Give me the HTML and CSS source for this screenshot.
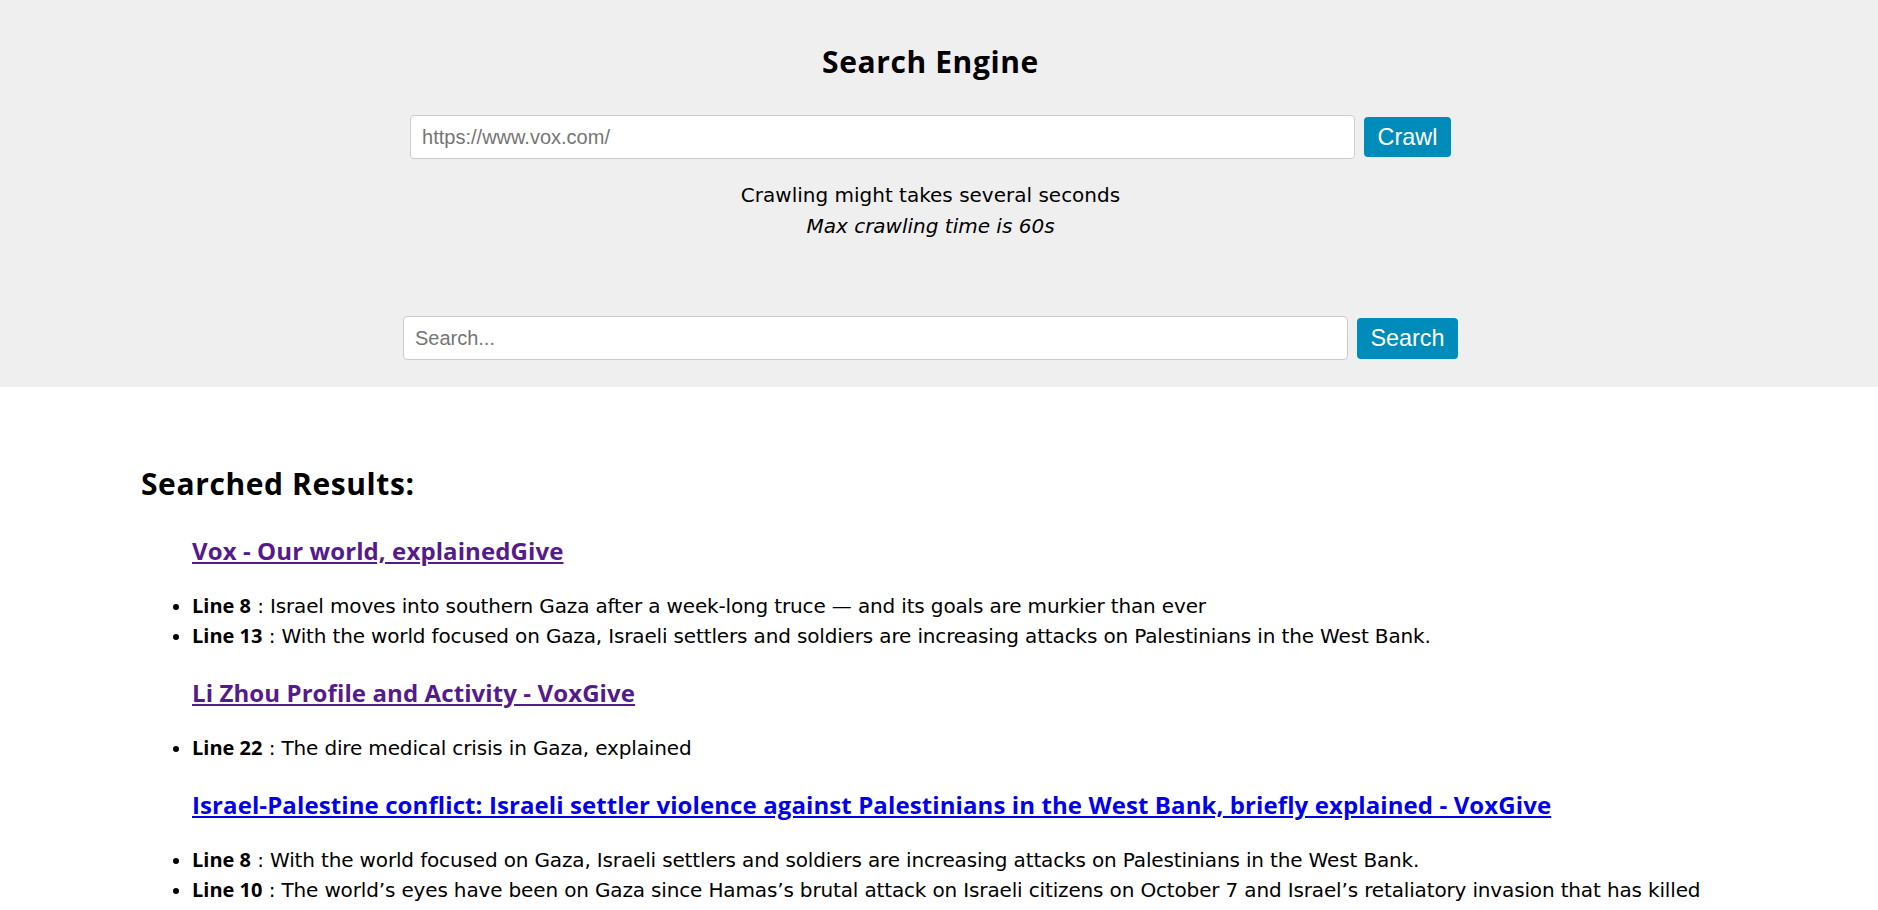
FILE: index.html
```html
<!DOCTYPE html>
<html lang="en">
<head>
<meta charset="utf-8">
<title>Search Engine</title>
<link rel="stylesheet" href="styles.css">
</head>
<body>
<header class="top">
  <h1 class="title">Search Engine</h1>
  <form class="bar bar-crawl">
    <input class="field" type="text" placeholder="https://www.vox.com/">
    <button class="btn" type="button">Crawl</button>
  </form>
  <p class="note">Crawling might takes several seconds<br><em>Max crawling time is 60s</em></p>
  <form class="bar bar-search">
    <input class="field" type="text" placeholder="Search...">
    <button class="btn btn-search" type="button">Search</button>
  </form>
</header>
<main class="results">
  <h2 class="results-title">Searched Results:</h2>
  <section class="result">
    <h3 class="result-title"><a class="link link-visited" href="#">Vox - Our world, explainedGive</a></h3>
    <ul class="lines">
      <li><b>Line 8</b> : Israel moves into southern Gaza after a week-long truce — and its goals are murkier than ever</li>
      <li><b>Line 13</b> : With the world focused on Gaza, Israeli settlers and soldiers are increasing attacks on Palestinians in the West Bank.</li>
    </ul>
  </section>
  <section class="result">
    <h3 class="result-title"><a class="link link-visited" href="#">Li Zhou Profile and Activity - VoxGive</a></h3>
    <ul class="lines">
      <li><b>Line 22</b> : The dire medical crisis in Gaza, explained</li>
    </ul>
  </section>
  <section class="result">
    <h3 class="result-title"><a class="link link-new" href="#">Israel-Palestine conflict: Israeli settler violence against Palestinians in the West Bank, briefly explained - VoxGive</a></h3>
    <ul class="lines">
      <li><b>Line 8</b> : With the world focused on Gaza, Israeli settlers and soldiers are increasing attacks on Palestinians in the West Bank.</li>
      <li><b>Line 10</b> : The world’s eyes have been on Gaza since Hamas’s brutal attack on Israeli citizens on October 7 and Israel’s retaliatory invasion that has killed</li>
    </ul>
  </section>
</main>
</body>
</html>
```
FILE: styles.css
```css
html {
  scrollbar-width: none;
}

body {
  margin: 0;
  font-family: "DejaVu Sans", sans-serif;
  font-size: 20px;
  line-height: 1.5;
  color: #000;
  background: #fff;
}

.top {
  background: #efefef;
  padding: 40px 17px 27px 0;
  text-align: center;
}

.title {
  margin: 0;
  font: 700 30px/44px "Open Sans", sans-serif;
  letter-spacing: 0.6px;
}

.bar {
  display: flex;
  justify-content: center;
  align-items: center;
  gap: 9px;
  margin: 0;
}

.bar-crawl {
  margin-top: 31px;
}

.bar-search {
  margin-top: 74px;
}

.field {
  width: 945px;
  height: 44px;
  box-sizing: border-box;
  border: 1px solid #ccc;
  border-radius: 4px;
  padding: 0 11px;
  font: 20px "Liberation Sans", Arial, sans-serif;
  background: #fff;
  color: #000;
}

.field::placeholder {
  color: #757575;
}

.btn {
  height: 40px;
  padding: 0 13.5px;
  border: none;
  border-radius: 4px;
  background: #008cba;
  color: #fff;
  font: 23.4px "Liberation Sans", Arial, sans-serif;
}

.btn-search {
  height: 41px;
}

.note {
  margin: 21px 0 0;
  line-height: 31px;
}

.note em {
  font-style: italic;
}

.results {
  padding: 74px 141px 0;
}

.results-title {
  margin: 0 0 27px;
  font: 700 30px/45px "Open Sans", sans-serif;
  letter-spacing: 0.6px;
}

.result-title {
  margin: 23.4px 0 23.4px 51px;
  font: 700 24px/35px "Open Sans", sans-serif;
  letter-spacing: 0.1px;
}

.link {
  text-decoration: underline;
}

.link-visited {
  color: #551a8b;
}

.link-new {
  color: #0000ee;
}

.lines {
  margin: 23.4px 0;
  padding-left: 51px;
  letter-spacing: -0.15px;
}

.lines b {
  font-family: "Open Sans", sans-serif;
  font-weight: 700;
  letter-spacing: 0;
}
```
